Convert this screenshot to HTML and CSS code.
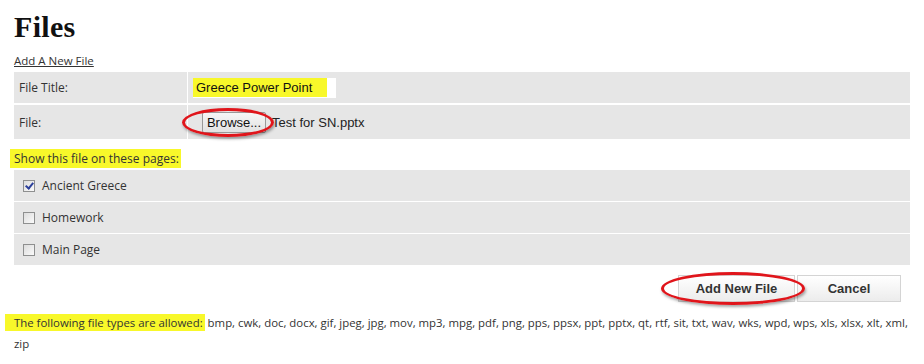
FILE: index.html
```html
<!DOCTYPE html>
<html>
<head>
  <link rel="stylesheet" href="styles.css">
</head>
<body>
  <h1 class="page-title">Files</h1>
  <a class="add-link" href="#">Add A New File</a>

  <div class="form-table">
    <div class="form-row first">
      <div class="form-label">File Title:</div>
      <div class="form-field">
        <span class="title-input"><span class="hl">Greece Power Point</span></span>
      </div>
    </div>
    <div class="form-row second">
      <div class="form-label">File:</div>
      <div class="form-field">
        <span class="browse-wrap">
          <button class="browse-btn">Browse...</button>
          <span class="circle browse-circle"></span>
        </span>
        <span class="file-name">Test for SN.pptx</span>
      </div>
    </div>
  </div>

  <p class="pages-label"><span class="hl">Show this file on these pages:</span></p>

  <div class="page-list">
    <label class="page-row"><span class="check checked"></span>Ancient Greece</label>
    <label class="page-row"><span class="check"></span>Homework</label>
    <label class="page-row"><span class="check"></span>Main Page</label>
  </div>

  <div class="actions">
    <span class="add-wrap">
      <button class="action-btn add-btn">Add New File</button>
      <span class="circle add-circle"></span>
    </span>
    <button class="action-btn cancel-btn">Cancel</button>
  </div>

  <p class="types"><span class="hl types-hl">The following file types are allowed:</span> bmp, cwk, doc, docx, gif, jpeg, jpg, mov, mp3, mpg, pdf, png, pps, ppsx, ppt, pptx, qt, rtf, sit, txt, wav, wks, wpd, wps, xls, xlsx, xlt, xml, zip</p>
</body>
</html>
```

FILE: styles.css
```css
body {
  margin: 0;
  padding: 0 14px 0 14px;
  font-family: 'Open Sans', sans-serif;
  color: #333;
  background: #fff;
}

.page-title {
  font-family: 'Liberation Serif', serif;
  font-size: 30px;
  font-weight: bold;
  color: #111;
  margin: 11px 0 0 0;
  line-height: 32px;
  letter-spacing: 0.3px;
}

.add-link {
  display: inline-block;
  margin-top: 10px;
  font-size: 11.5px;
  line-height: 16px;
  color: #333;
  text-decoration: underline;
}

.hl {
  background: #f8f82a;
}

/* file title / file rows */
.form-table {
  display: flex;
  flex-direction: column;
  gap: 2px;
  margin-top: 2px;
}

.form-row {
  display: flex;
  gap: 1px;
  background: #fff;
}

.form-row.first { height: 31px; }
.form-row.second { height: 34px; }

.form-label {
  width: 173px;
  background: #e6e6e6;
  display: flex;
  align-items: center;
  padding-left: 5px;
  box-sizing: border-box;
  font-size: 12px;
}

.form-field {
  flex: 1;
  background: #e6e6e6;
  display: flex;
  align-items: center;
  padding-left: 5px;
}

.title-input {
  display: inline-block;
  width: 143px;
  height: 20px;
  background: #fff;
  font-family: 'Liberation Sans', Arial, sans-serif;
  font-size: 13px;
  line-height: 20px;
  color: #111;
}

.title-input .hl {
  padding: 2px 15px 2px 3px;
}

.browse-wrap {
  position: relative;
  display: inline-block;
  margin-left: 9px;
}

.browse-btn {
  width: 64px;
  height: 21px;
  padding: 0;
  border: 1px solid #999;
  border-radius: 2px;
  background: linear-gradient(#f6f6f6, #e2e2e2);
  font-family: 'Liberation Sans', Arial, sans-serif;
  font-size: 13px;
  color: #111;
  display: block;
}

.file-name {
  font-family: 'Liberation Sans', Arial, sans-serif;
  font-size: 13px;
  color: #222;
  margin-left: 6px;
}

.circle {
  position: absolute;
  border: 3px solid #e0151b;
  border-radius: 50%;
  box-shadow: 1px 2px 3px rgba(0, 0, 0, 0.35);
  pointer-events: none;
}

.browse-circle {
  left: -20px;
  top: -4px;
  width: 86px;
  height: 23px;
}

/* pages */
.pages-label {
  margin: 12px 0 0 -4px;
  font-size: 12px;
  line-height: 16px;
}

.pages-label .hl {
  padding: 1px 2px 1px 4px;
}

.page-list {
  display: flex;
  flex-direction: column;
  gap: 1px;
  margin-top: 3px;
}

.page-row {
  height: 31px;
  background: #e6e6e6;
  display: flex;
  align-items: center;
  padding-left: 9px;
  font-size: 12px;
  color: #333;
}

.check {
  width: 10px;
  height: 10px;
  border: 1px solid #8e8f8f;
  background: linear-gradient(135deg, #dcdcdc, #fafafa);
  margin-right: 7px;
  position: relative;
}

.check.checked::after {
  content: '';
  position: absolute;
  left: 3px;
  top: 0px;
  width: 3px;
  height: 6px;
  border: solid #2b3f9a;
  border-width: 0 2px 2px 0;
  transform: rotate(40deg);
}

/* buttons */
.actions {
  display: flex;
  justify-content: flex-end;
  align-items: center;
  gap: 2px;
  margin-top: 10px;
  padding-right: 9px;
}

.add-wrap {
  position: relative;
  display: inline-block;
}

.action-btn {
  height: 27px;
  border: 1px solid #d4d4d4;
  background: linear-gradient(#ffffff, #ececec);
  font-family: 'Liberation Sans', Arial, sans-serif;
  font-weight: bold;
  font-size: 13px;
  color: #333;
  display: block;
}

.add-btn { width: 117px; }
.cancel-btn { width: 104px; }

.add-circle {
  left: -17px;
  top: -3px;
  width: 138px;
  height: 27px;
}

/* allowed types */
.types {
  margin: 10px 0 0 0;
  font-size: 11.4px;
  line-height: 21px;
  color: #333;
}

.types-hl {
  margin-left: -9px;
  padding: 1px 2px 1px 9px;
}
```
